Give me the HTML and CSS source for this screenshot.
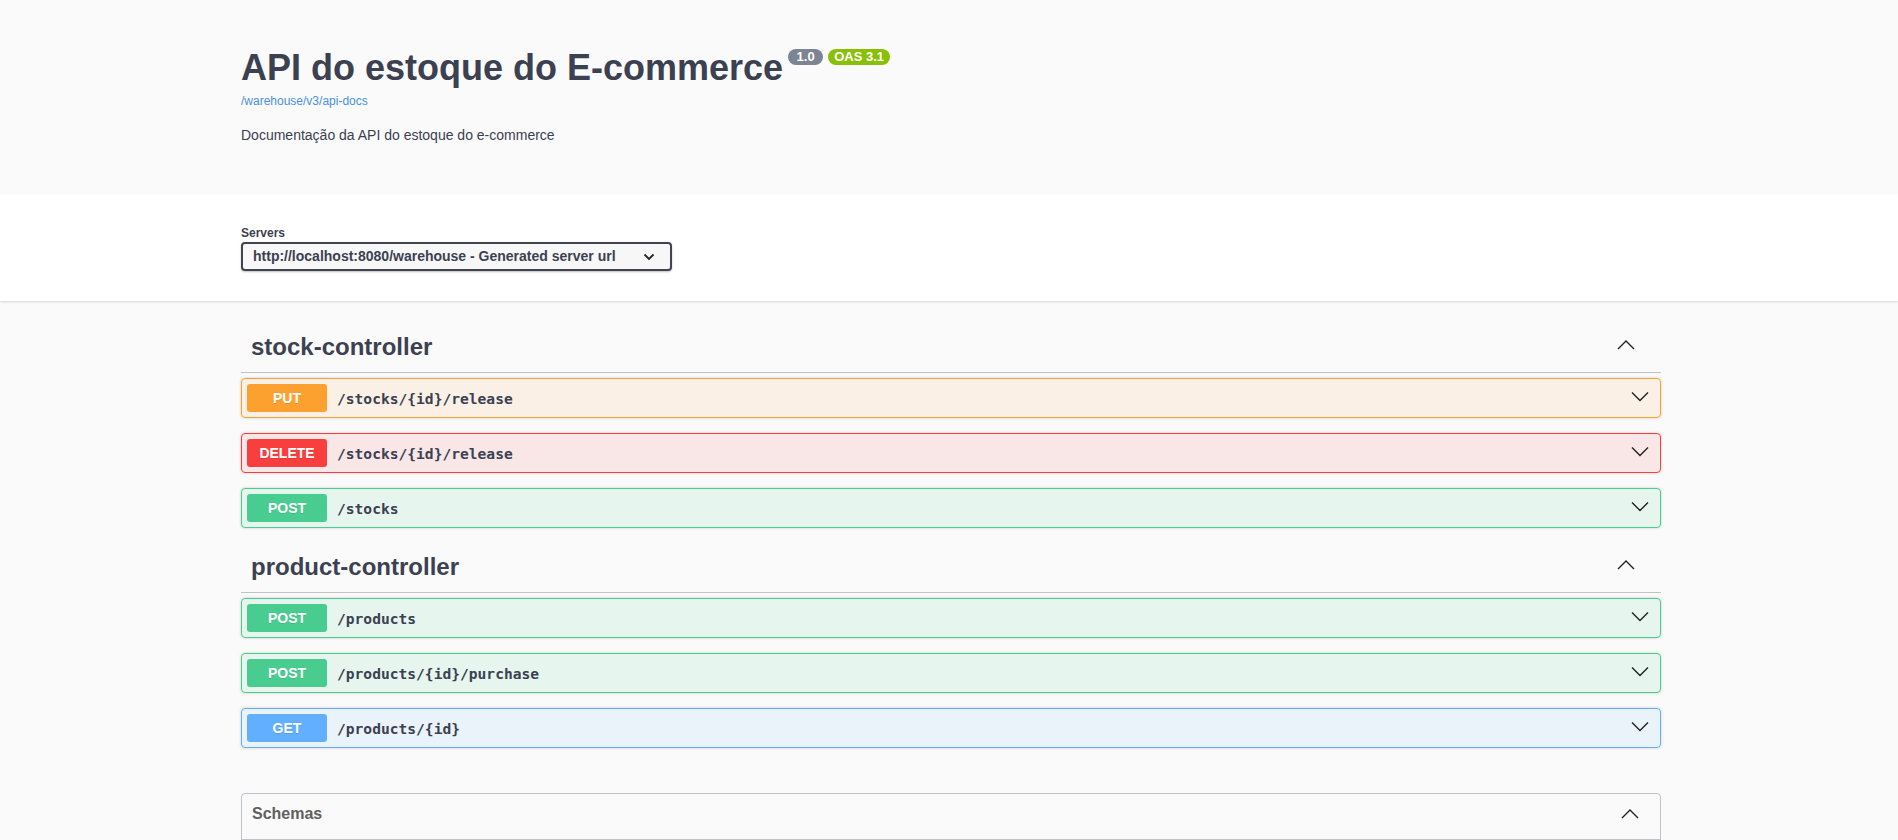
FILE: index.html
```html
<!DOCTYPE html>
<html lang="pt">
<head>
<meta charset="utf-8">
<title>Swagger UI</title>
<link rel="stylesheet" href="styles.css">
</head>
<body>
<div class="info-section">
  <div class="wrapper">
    <hgroup class="main">
      <h2 class="title"><span>API do estoque do E-commerce</span><span class="badges"><span class="badge badge-version">1.0</span><span class="badge badge-oas">OAS 3.1</span></span></h2>
      <a class="base-url" href="#">/warehouse/v3/api-docs</a>
    </hgroup>
    <div class="description"><p>Documentação da API do estoque do e-commerce</p></div>
  </div>
</div>

<div class="scheme-container">
  <div class="wrapper">
    <span class="servers-title">Servers</span>
    <div class="select">
      <span>http://localhost:8080/warehouse - Generated server url</span>
      <svg class="select-arrow" width="12" height="8" viewBox="0 0 12 8"><polyline points="1.5,1.5 6,6 10.5,1.5" fill="none" stroke="#222" stroke-width="1.8"/></svg>
    </div>
  </div>
</div>

<div class="wrapper ops">
  <section class="tag-section">
    <h3 class="tag"><span>stock-controller</span><svg class="tag-arrow" width="20" height="20" viewBox="0 0 20 20"><polyline points="2,12 10,4 18,12" fill="none" stroke="#222" stroke-width="1.4"/></svg></h3>
    <div class="opblock put"><div class="summary"><span class="method">PUT</span><span class="path">/stocks/{id}/release</span><svg class="op-arrow" width="20" height="20" viewBox="0 0 20 20"><polyline points="2,4.5 10,12.5 18,4.5" fill="none" stroke="#222" stroke-width="1.4"/></svg></div></div>
    <div class="opblock delete"><div class="summary"><span class="method">DELETE</span><span class="path">/stocks/{id}/release</span><svg class="op-arrow" width="20" height="20" viewBox="0 0 20 20"><polyline points="2,4.5 10,12.5 18,4.5" fill="none" stroke="#222" stroke-width="1.4"/></svg></div></div>
    <div class="opblock post"><div class="summary"><span class="method">POST</span><span class="path">/stocks</span><svg class="op-arrow" width="20" height="20" viewBox="0 0 20 20"><polyline points="2,4.5 10,12.5 18,4.5" fill="none" stroke="#222" stroke-width="1.4"/></svg></div></div>
  </section>
  <section class="tag-section">
    <h3 class="tag"><span>product-controller</span><svg class="tag-arrow" width="20" height="20" viewBox="0 0 20 20"><polyline points="2,12 10,4 18,12" fill="none" stroke="#222" stroke-width="1.4"/></svg></h3>
    <div class="opblock post"><div class="summary"><span class="method">POST</span><span class="path">/products</span><svg class="op-arrow" width="20" height="20" viewBox="0 0 20 20"><polyline points="2,4.5 10,12.5 18,4.5" fill="none" stroke="#222" stroke-width="1.4"/></svg></div></div>
    <div class="opblock post"><div class="summary"><span class="method">POST</span><span class="path">/products/{id}/purchase</span><svg class="op-arrow" width="20" height="20" viewBox="0 0 20 20"><polyline points="2,4.5 10,12.5 18,4.5" fill="none" stroke="#222" stroke-width="1.4"/></svg></div></div>
    <div class="opblock get"><div class="summary"><span class="method">GET</span><span class="path">/products/{id}</span><svg class="op-arrow" width="20" height="20" viewBox="0 0 20 20"><polyline points="2,4.5 10,12.5 18,4.5" fill="none" stroke="#222" stroke-width="1.4"/></svg></div></div>
  </section>
  <section class="models">
    <h4 class="models-title"><span>Schemas</span><svg width="20" height="20" viewBox="0 0 20 20"><polyline points="2,14 10,6 18,14" fill="none" stroke="#222" stroke-width="1.4"/></svg></h4>
  </section>
</div>
</body>
</html>
```

FILE: styles.css
```css
* { box-sizing: border-box; }

body {
  margin: 0;
  background: #fafafa;
  font-family: "Liberation Sans", Arial, sans-serif;
  color: #3b4151;
}

.wrapper {
  max-width: 1460px;
  margin: 0 auto;
  padding: 0 18px 0 22px;
}

/* info */
.info-section { padding: 47px 0 49px; }

.main { margin: 0; }

.title {
  margin: 0 0 6px;
  display: flex;
  align-items: flex-start;
  font-size: 36px;
  line-height: 41px;
  font-weight: 700;
  color: #3b4151;
}

.badges {
  display: flex;
  gap: 5px;
  margin: 2px 0 0 5px;
}

.badge {
  height: 16px;
  line-height: 16px;
  border-radius: 57px;
  color: #fff;
  font-size: 13px;
  font-weight: 700;
}

.badge-version { background: #7d8492; padding: 0 8.5px; }
.badge-oas { background: #89bf04; padding: 0 6px; }

.base-url {
  display: block;
  font-size: 12px;
  line-height: 14px;
  color: #4990e2;
  text-decoration: none;
}

.description {
  margin-top: 17px;
  font-size: 14px;
  line-height: 20px;
}

.description p { margin: 0; }

/* servers */
.scheme-container {
  background: #fff;
  box-shadow: 0 1px 2px 0 rgba(0, 0, 0, .15);
  padding: 30px 0;
}

.servers-title {
  display: block;
  font-size: 12px;
  line-height: 18px;
  font-weight: 700;
}

.select {
  display: flex;
  align-items: center;
  justify-content: space-between;
  width: 431px;
  height: 29px;
  padding: 0 15px 0 10px;
  border: 2px solid #41444e;
  border-radius: 4px;
  background: #f7f7f7;
  box-shadow: 0 1px 2px 0 rgba(0, 0, 0, .25);
  font-size: 14px;
  line-height: 25px;
  font-weight: 700;
  color: #3b4151;
}

/* operations */
.ops { padding-top: 22px; }

.tag-section {
  display: flex;
  flex-direction: column;
}

.tag {
  display: flex;
  align-items: center;
  justify-content: space-between;
  margin: 0 0 5px;
  padding: 10px 20px 11px 10px;
  border-bottom: 1px solid rgba(59, 65, 81, .3);
  font-size: 24px;
  line-height: 28px;
  font-weight: 700;
  color: #3b4151;
}

.tag-arrow { margin-right: 5px; }

.opblock {
  margin: 0 0 15px;
  border: 1px solid #000;
  border-radius: 4px;
  box-shadow: 0 0 3px rgba(0, 0, 0, .19);
}

.summary {
  display: flex;
  align-items: center;
  padding: 5px;
}

.method {
  min-width: 80px;
  padding: 6px 0;
  border-radius: 3px;
  color: #fff;
  font-size: 14px;
  line-height: 16px;
  font-weight: 700;
  text-align: center;
  text-shadow: 0 1px 0 rgba(0, 0, 0, .1);
}

.path {
  flex: 1;
  padding: 0 10px;
  font-family: "DejaVu Sans Mono", "Liberation Mono", monospace;
  font-size: 14.6px;
  font-weight: 700;
  color: #3b4151;
}

.op-arrow { margin-right: 5px; }

.put { background: rgba(252, 161, 48, .1); border-color: #fca130; }
.put .method { background: #fca130; }

.delete { background: rgba(249, 62, 62, .1); border-color: #f93e3e; }
.delete .method { background: #f93e3e; }

.post { background: rgba(73, 204, 144, .1); border-color: #49cc90; }
.post .method { background: #49cc90; }

.get { background: rgba(97, 175, 254, .1); border-color: #61affe; }
.get .method { background: #61affe; }

/* schemas */
.models {
  margin: 30px 0;
  padding-bottom: 20px;
  border: 1px solid rgba(59, 65, 81, .3);
  border-radius: 4px;
}

.models-title {
  display: flex;
  align-items: center;
  justify-content: space-between;
  margin: 0;
  padding: 10px 20px 15px 10px;
  border-bottom: 1px solid rgba(59, 65, 81, .3);
  font-size: 16px;
  line-height: 18px;
  font-weight: 700;
  color: #606060;
}
```
